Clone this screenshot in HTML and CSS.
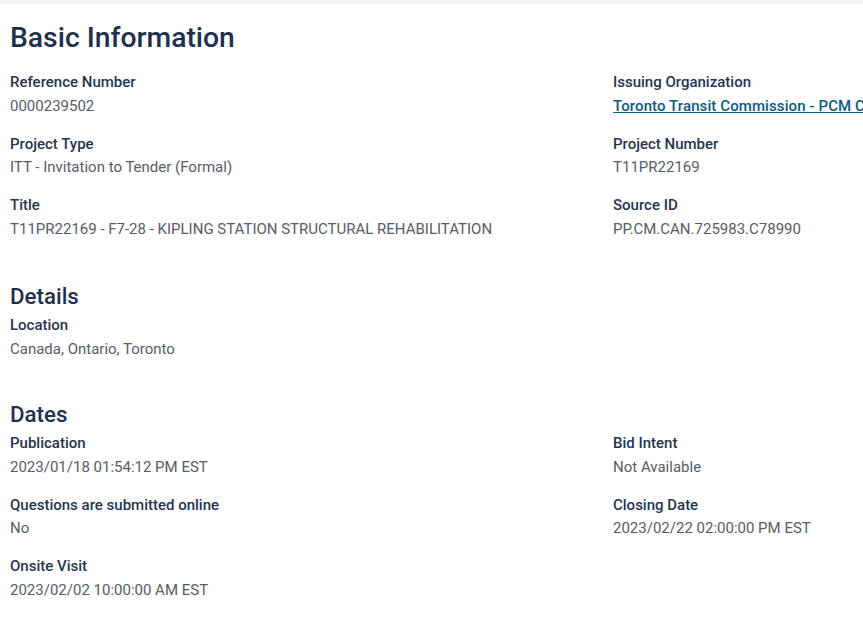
FILE: index.html
```html
<!DOCTYPE html>
<html>
<head>
<meta charset="utf-8">
<link rel="stylesheet" href="styles.css">
</head>
<body>
<div class="topbar"></div>
<main class="page">
  <section class="section">
    <h1 class="title">Basic Information</h1>
    <div class="grid">
      <div class="field"><div class="label">Reference Number</div><div class="value">0000239502</div></div>
      <div class="field"><div class="label">Issuing Organization</div><div class="value"><a class="link" href="#">Toronto Transit Commission - PCM Contracts</a></div></div>
      <div class="field"><div class="label">Project Type</div><div class="value">ITT - Invitation to Tender (Formal)</div></div>
      <div class="field"><div class="label">Project Number</div><div class="value">T11PR22169</div></div>
      <div class="field"><div class="label">Title</div><div class="value">T11PR22169 - F7-28 - KIPLING STATION STRUCTURAL REHABILITATION</div></div>
      <div class="field"><div class="label">Source ID</div><div class="value">PP.CM.CAN.725983.C78990</div></div>
    </div>
  </section>
  <section class="section sub">
    <h2 class="subtitle">Details</h2>
    <div class="grid">
      <div class="field"><div class="label">Location</div><div class="value">Canada, Ontario, Toronto</div></div>
    </div>
  </section>
  <section class="section sub dates">
    <h2 class="subtitle">Dates</h2>
    <div class="grid">
      <div class="field"><div class="label">Publication</div><div class="value">2023/01/18 01:54:12 PM EST</div></div>
      <div class="field"><div class="label">Bid Intent</div><div class="value">Not Available</div></div>
      <div class="field"><div class="label">Questions are submitted online</div><div class="value">No</div></div>
      <div class="field"><div class="label">Closing Date</div><div class="value">2023/02/22 02:00:00 PM EST</div></div>
      <div class="field"><div class="label">Onsite Visit</div><div class="value">2023/02/02 10:00:00 AM EST</div></div>
    </div>
  </section>
</main>
</body>
</html>
```
FILE: styles.css
```css
html, body {
  margin: 0;
  padding: 0;
  background: #ffffff;
  overflow: hidden;
}
body {
  font-family: Roboto, "Liberation Sans", sans-serif;
  width: 863px;
}
.topbar {
  height: 4px;
  background: #f3f4f7;
}
.page {
  padding: 0 0 0 10px;
  width: 1206px;
}
.title {
  margin: 0;
  padding-top: 18px;
  font-size: 28.3px;
  line-height: 32px;
  font-weight: 500;
  color: #1f304f;
}
.subtitle {
  margin: 0;
  font-size: 22.3px;
  line-height: 26px;
  font-weight: 500;
  color: #1f304f;
}
.section .grid {
  display: grid;
  grid-template-columns: 603px 603px;
  row-gap: 18px;
}
.section:first-child .grid {
  margin-top: 18px;
}
.sub {
  margin-top: 44px;
}
.sub.dates {
  margin-top: 42px;
}
.sub .grid {
  margin-top: 6.5px;
}
.field {
  white-space: nowrap;
}
.label {
  font-size: 15px;
  line-height: 20px;
  font-weight: 500;
  color: #26354f;
}
.value {
  margin-top: 3.5px;
  font-size: 15px;
  line-height: 20px;
  color: #575c66;
}
.link {
  color: #0d5a80;
  font-weight: 500;
  letter-spacing: 0.1px;
  text-decoration: underline;
}
```
